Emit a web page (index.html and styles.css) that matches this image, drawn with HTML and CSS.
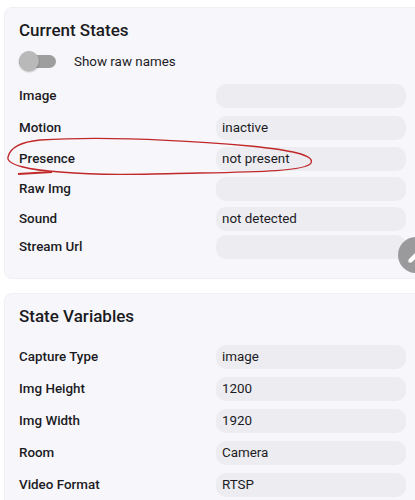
FILE: index.html
```html
<!DOCTYPE html>
<html>
<head>
<meta charset="utf-8">
<link rel="stylesheet" href="styles.css">
</head>
<body>
<div class="page">
  <section class="card card-states">
    <h2 class="card-title">Current States</h2>
    <div class="toggle-row">
      <span class="switch"><span class="track"></span><span class="thumb"></span></span>
      <span class="toggle-label">Show raw names</span>
    </div>
    <div class="rows rows-states">
      <div class="label">Image</div><div class="value"></div>
      <div class="label">Motion</div><div class="value">inactive</div>
      <div class="label">Presence</div><div class="value">not present</div>
      <div class="label">Raw Img</div><div class="value"></div>
      <div class="label">Sound</div><div class="value">not detected</div>
      <div class="label">Stream Url</div><div class="value"></div>
    </div>
    <div class="fab">
      <svg viewBox="0 0 24 24" width="20" height="20"><path fill="#fff" d="M3 17.25V21h3.75L17.81 9.94l-3.75-3.75L3 17.25zM20.71 7.04a1 1 0 0 0 0-1.41l-2.34-2.34a1 1 0 0 0-1.41 0l-1.83 1.83 3.75 3.75 1.83-1.83z"/></svg>
    </div>
  </section>
  <section class="card card-vars">
    <h2 class="card-title">State Variables</h2>
    <div class="rows rows-vars">
      <div class="label">Capture Type</div><div class="value">image</div>
      <div class="label">Img Height</div><div class="value">1200</div>
      <div class="label">Img Width</div><div class="value">1920</div>
      <div class="label">Room</div><div class="value">Camera</div>
      <div class="label">Video Format</div><div class="value">RTSP</div>
    </div>
  </section>
</div>
<svg class="annotation" viewBox="0 0 415 500" width="415" height="500">
  <path d="M40 140 C100 136 180 140 250 146 C290 150 315 155 311 163 C306 171 260 172 200 173 C150 174 110 176 60 172 C30 170 6 165 8 157 C10 148 20 142 40 140" fill="none" stroke="#c0282a" stroke-width="1.4"/>
  <path d="M18 174 L52 172" fill="none" stroke="#c0282a" stroke-width="2"/>
</svg>
</body>
</html>
```
FILE: styles.css
```css
html, body {
  margin: 0;
  padding: 0;
  overflow: hidden;
  background: #ffffff;
}
body {
  font-family: Roboto, "Noto Sans", sans-serif;
  color: #1c1b1f;
  position: relative;
  width: 415px;
  height: 500px;
}
.page {
  padding: 7px 0 0 4px;
  display: flex;
  flex-direction: column;
  gap: 14px;
}
.card {
  position: relative;
  width: 420px;
  box-sizing: border-box;
  background: #f7f7fb;
  border: 1px solid #efeff4;
  border-radius: 8px;
  padding: 11px 0 0 14px;
}
.card-states {
  height: 272px;
}
.card-vars {
  height: 230px;
}
.card-title {
  margin: 0;
  font-size: 17px;
  line-height: 22px;
  font-weight: 500;
}
.toggle-row {
  display: flex;
  align-items: center;
  height: 22px;
  margin-top: 9px;
}
.switch {
  position: relative;
  width: 38px;
  height: 22px;
  display: inline-block;
}
.track {
  position: absolute;
  left: 0;
  top: 5px;
  width: 37px;
  height: 13px;
  border-radius: 7px;
  background: #9e9e9e;
}
.thumb {
  position: absolute;
  left: 0;
  top: 1px;
  width: 20px;
  height: 20px;
  border-radius: 50%;
  background: #b9b9b9;
  box-shadow: 0 1px 2px rgba(0,0,0,0.3);
}
.toggle-label {
  margin-left: 17px;
  font-size: 13.4px;
}
.rows {
  display: grid;
  grid-template-columns: 197px 190px;
  align-items: center;
}
.rows-states {
  margin-top: 8px;
  grid-template-rows: 32px 31px 31px 30px 29px 28px;
}
.rows-vars {
  margin-top: 18px;
  row-gap: 8px;
}
.label {
  font-size: 13.4px;
  font-weight: 500;
  line-height: 24px;
}
.value {
  height: 24px;
  line-height: 24px;
  border-radius: 10px;
  background: #ececf1;
  padding-left: 6px;
  font-size: 13.4px;
}
.fab {
  position: absolute;
  left: 393px;
  top: 229px;
  width: 36px;
  height: 36px;
  border-radius: 50%;
  background: #9a9a9c;
  display: flex;
  align-items: center;
  justify-content: center;
}
.annotation {
  position: absolute;
  left: 0;
  top: 0;
  pointer-events: none;
}
```
